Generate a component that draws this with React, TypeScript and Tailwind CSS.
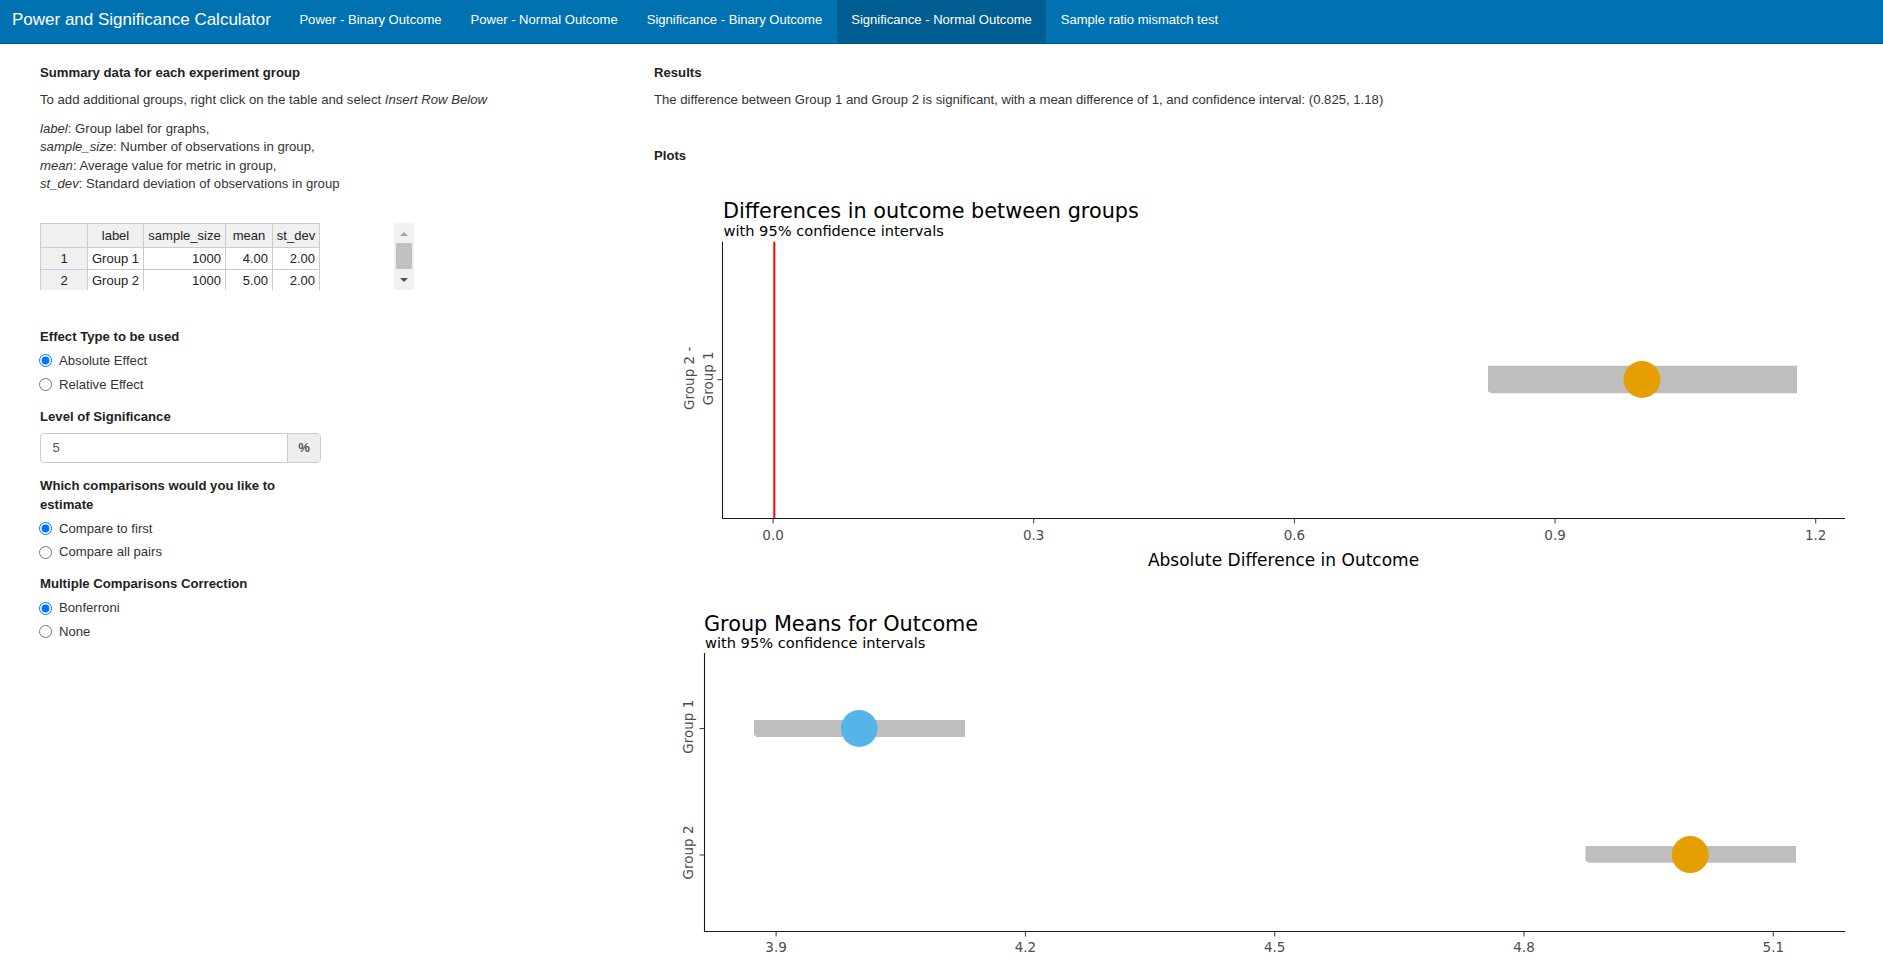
import React from "react";

const px1 = (v: number) => 68 + (v + 0.05875) * 868.9;
const px2 = (v: number) => 50.3 + (v - 3.8136) * 831;

function Bar({ x1, x2, y1, y2 }: { x1: number; x2: number; y1: number; y2: number }) {
  return (
    <path
      d={`M${x1} ${y1}H${x2}V${y2}H${x1 + 2}V${y2 - 1.5}H${x1}Z`}
      fill="#bebebe"
    />
  );
}

function Radio({ name, label, checked }: { name: string; label: string; checked?: boolean }) {
  return (
    <label className="flex h-[19px] items-center">
      <input
        type="radio"
        name={name}
        defaultChecked={checked}
        className="m-0 ml-[-1px] h-[13px] w-[13px] shrink-0"
      />
      <span className="ml-[7px]">{label}</span>
    </label>
  );
}

function Plot1() {
  const ticks = [0, 0.3, 0.6, 0.9, 1.2];
  const labels = ["0.0", "0.3", "0.6", "0.9", "1.2"];
  return (
    <svg width="1229" height="400" className="block font-['DejaVu_Sans',Verdana,sans-serif]">
      <text x="69" y="42.7" fontSize="20.8" fill="#000">
        Differences in outcome between groups
      </text>
      <text x="69.5" y="60.7" fontSize="14.6" fill="#000">
        with 95% confidence intervals
      </text>
      <line x1="120.3" y1="66.7" x2="120.3" y2="343" stroke="#ff0000" strokeWidth="2" />
      <line x1="68.5" y1="66.7" x2="68.5" y2="343.5" stroke="#1a1a1a" strokeWidth="1.1" />
      <line x1="68" y1="343.5" x2="1191" y2="343.5" stroke="#1a1a1a" strokeWidth="1.1" />
      {ticks.map((t, i) => (
        <g key={t}>
          <line x1={px1(t)} y1="343.5" x2={px1(t)} y2="348.5" stroke="#333" strokeWidth="1" />
          <text x={px1(t)} y="365" fontSize="13.5" fill="#4d4d4d" textAnchor="middle">
            {labels[i]}
          </text>
        </g>
      ))}
      <line x1="63.5" y1="204.7" x2="68.5" y2="204.7" stroke="#333" strokeWidth="1" />
      <text transform="translate(39.5,203.3) rotate(-90)" fontSize="13.5" fill="#4d4d4d" textAnchor="middle">
        Group 2 -
      </text>
      <text transform="translate(58.8,203.3) rotate(-90)" fontSize="13.5" fill="#4d4d4d" textAnchor="middle">
        Group 1
      </text>
      <text x="629.5" y="391" fontSize="17" fill="#000" textAnchor="middle">
        Absolute Difference in Outcome
      </text>
      <Bar x1={834} x2={1143} y1={190.7} y2={218.3} />
      <circle cx={px1(1)} cy="204.5" r="18.5" fill="#E69F00" />
    </svg>
  );
}

function Plot2() {
  const ticks = [3.9, 4.2, 4.5, 4.8, 5.1];
  return (
    <svg width="1229" height="385" className="block font-['DejaVu_Sans',Verdana,sans-serif]">
      <text x="50" y="55.7" fontSize="20.8" fill="#000">
        Group Means for Outcome
      </text>
      <text x="51" y="72.7" fontSize="14.6" fill="#000">
        with 95% confidence intervals
      </text>
      <line x1="50.5" y1="78" x2="50.5" y2="356.5" stroke="#1a1a1a" strokeWidth="1.1" />
      <line x1="50" y1="356.5" x2="1191" y2="356.5" stroke="#1a1a1a" strokeWidth="1.1" />
      {ticks.map((t) => (
        <g key={t}>
          <line x1={px2(t)} y1="356.5" x2={px2(t)} y2="361.5" stroke="#333" strokeWidth="1" />
          <text x={px2(t)} y="377.3" fontSize="13.5" fill="#4d4d4d" textAnchor="middle">
            {t.toFixed(1)}
          </text>
        </g>
      ))}
      <line x1="45.5" y1="153.6" x2="50.5" y2="153.6" stroke="#333" strokeWidth="1" />
      <line x1="45.5" y1="280" x2="50.5" y2="280" stroke="#333" strokeWidth="1" />
      <text transform="translate(39.2,151.7) rotate(-90)" fontSize="13.5" fill="#4d4d4d" textAnchor="middle">
        Group 1
      </text>
      <text transform="translate(39.2,277.5) rotate(-90)" fontSize="13.5" fill="#4d4d4d" textAnchor="middle">
        Group 2
      </text>
      <Bar x1={100} x2={311} y1={145} y2={162} />
      <circle cx={px2(4)} cy="153.5" r="18.4" fill="#56B4E9" />
      <Bar x1={931.5} x2={1142} y1={271} y2={287.7} />
      <circle cx={px2(5)} cy="279.6" r="18.5" fill="#E69F00" />
    </svg>
  );
}

export default function App() {
  const navItems = [
    "Power - Binary Outcome",
    "Power - Normal Outcome",
    "Significance - Binary Outcome",
    "Significance - Normal Outcome",
    "Sample ratio mismatch test",
  ];
  const cell = "border border-[#ccc] p-0";
  return (
    <div className="min-h-screen bg-white font-['Liberation_Sans',Arial,sans-serif] text-[13.15px] leading-[18.6px] text-[#333]">
      <nav className="flex h-[44px] border-b border-[#00598b] bg-[#0071b1] text-white">
        <div className="pl-[12px] pr-[14px] pt-[9.8px] text-[17px] leading-[20px]">
          Power and Significance Calculator
        </div>
        {navItems.map((n) => (
          <div
            key={n}
            className={`h-full px-[14.5px] pt-[10.5px] text-[13.05px] leading-[18.6px] ${
              n === "Significance - Normal Outcome" ? "bg-[#005d91]" : ""
            }`}
          >
            {n}
          </div>
        ))}
      </nav>

      <div className="flex">
        <div className="w-[654px] shrink-0 pl-[40px] pt-[20px]">
          <div className="font-bold text-[#222]">Summary data for each experiment group</div>
          <p className="mt-[8.8px]">
            To add additional groups, right click on the table and select <i>Insert Row Below</i>
          </p>
          <p className="mt-[9.7px]">
            <i>label</i>: Group label for graphs,
            <br />
            <i>sample_size</i>: Number of observations in group,
            <br />
            <i>mean</i>: Average value for metric in group,
            <br />
            <i>st_dev</i>: Standard deviation of observations in group
          </p>

          <div className="relative mt-[29.2px] h-[67px] w-[374px] overflow-hidden">
            <table className="w-[280px] table-fixed border-collapse text-[13px] leading-[16px] text-[#222]">
              <colgroup>
                <col className="w-[47px]" />
                <col className="w-[56px]" />
                <col className="w-[82px]" />
                <col className="w-[47px]" />
                <col className="w-[47px]" />
              </colgroup>
              <thead>
                <tr className="h-[24px]">
                  <th className={`${cell} bg-[#f0f0f0] font-normal`}></th>
                  <th className={`${cell} bg-[#f0f0f0] font-normal`}>label</th>
                  <th className={`${cell} bg-[#f0f0f0] font-normal`}>sample_size</th>
                  <th className={`${cell} bg-[#f0f0f0] font-normal`}>mean</th>
                  <th className={`${cell} bg-[#f0f0f0] font-normal`}>st_dev</th>
                </tr>
              </thead>
              <tbody>
                {[
                  ["1", "Group 1", "1000", "4.00", "2.00"],
                  ["2", "Group 2", "1000", "5.00", "2.00"],
                ].map((r) => (
                  <tr key={r[0]} className="h-[22px]">
                    <td className={`${cell} bg-[#f0f0f0] text-center`}>{r[0]}</td>
                    <td className={`${cell} px-[4px] text-left`}>{r[1]}</td>
                    <td className={`${cell} px-[4px] text-right`}>{r[2]}</td>
                    <td className={`${cell} px-[4px] text-right`}>{r[3]}</td>
                    <td className={`${cell} px-[4px] text-right`}>{r[4]}</td>
                  </tr>
                ))}
              </tbody>
            </table>
            <div className="absolute right-0 top-0 flex h-full w-[20px] flex-col items-center bg-[#f1f1f1]">
              <div className="mt-[9px] h-0 w-0 border-x-[4.5px] border-b-[4.5px] border-x-transparent border-b-[#a3a3a3]" />
              <div className="mt-[7px] h-[26px] w-[16px] bg-[#c1c1c1]" />
              <div className="mt-[9px] h-0 w-0 border-x-[4.5px] border-t-[4.5px] border-x-transparent border-t-[#505050]" />
            </div>
          </div>

          <div className="w-[281px]">
            <div className="mt-[38.2px] font-bold text-[#222]">Effect Type to be used</div>
            <div className="mt-[4.4px]">
              <Radio name="effect" label="Absolute Effect" checked />
            </div>
            <div className="mt-[5px]">
              <Radio name="effect" label="Relative Effect" />
            </div>

            <div className="mt-[13.4px] font-bold text-[#222]">Level of Significance</div>
            <div className="mt-[6.2px] flex h-[30.6px] overflow-hidden rounded-[4px] border border-[#ccc]">
              <div className="flex flex-1 items-center pl-[11.5px] text-[#555]">5</div>
              <div className="flex w-[33px] items-center justify-center border-l border-[#ccc] bg-[#eee] font-bold text-[#555]">
                %
              </div>
            </div>

            <div className="mt-[13.9px] font-bold text-[#222]">
              Which comparisons would you like to estimate
            </div>
            <div className="mt-[5.1px]">
              <Radio name="comp" label="Compare to first" checked />
            </div>
            <div className="mt-[4.3px]">
              <Radio name="comp" label="Compare all pairs" />
            </div>

            <div className="mt-[13.4px] font-bold text-[#222]">Multiple Comparisons Correction</div>
            <div className="mt-[5.4px]">
              <Radio name="corr" label="Bonferroni" checked />
            </div>
            <div className="mt-[4.3px]">
              <Radio name="corr" label="None" />
            </div>
          </div>
        </div>

        <div className="min-w-0 flex-1 pt-[20px]">
          <div className="font-bold text-[#222]">Results</div>
          <p className="mt-[8.8px]">
            The difference between Group 1 and Group 2 is significant, with a mean difference of 1, and
            confidence interval: (0.825, 1.18)
          </p>
          <div className="mt-[37.4px] font-bold text-[#222]">Plots</div>
          <div className="mt-[9px]">
            <Plot1 />
            <Plot2 />
          </div>
        </div>
      </div>
    </div>
  );
}
